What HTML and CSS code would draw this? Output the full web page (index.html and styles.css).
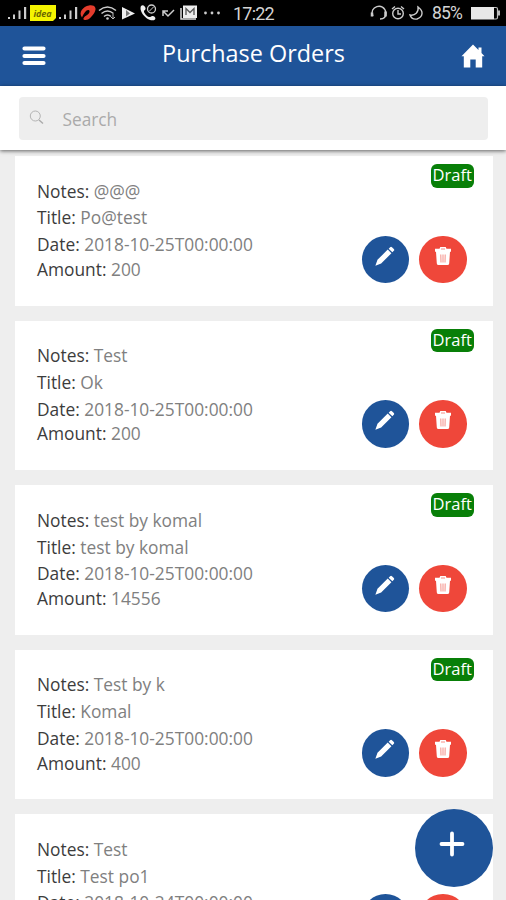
FILE: index.html
```html
<!DOCTYPE html>
<html lang="en">
<head>
<meta charset="utf-8">
<title>Purchase Orders</title>
<link rel="stylesheet" href="styles.css">
</head>
<body>
<svg class="defs" aria-hidden="true">
  <symbol id="pencil" viewBox="0 0 24 24"><path fill="#fff" d="M1.500 22.500l2.300-6.300L15 5l4 4L7.800 20.200zM16 4l1.600-1.600q1-1 2 0l2 2q1 1 0 2L20 8z"/></symbol>
  <symbol id="trash" viewBox="0 0 18 20"><path fill="#fff" d="M1 2.700h4.500L6.300 1h5.400l.8 1.700H17v3H1zM2 5.700h14l-.8 11.800q-.2 1.500-1.700 1.500h-9q-1.500 0-1.700-1.500z"/><path d="M7 3h4M6.800 8.500l.2 8M11.200 8.500l-.2 8M9 8.500v8" stroke="#ef473a" stroke-width="1" opacity=".6"/></symbol>
</svg>
<div class="status">
  <svg class="status-left" width="224" height="26" viewBox="0 0 224 26">
    <g fill="#ccc"><path d="M8 17h2v2H8zM13 14.500h2V19h-2zM18.500 10.500h2V19h-2zM24 7h2.200v12H24z"/><path d="M59 17h2v2h-2zM64 14.500h2V19h-2zM69.500 10.500h2V19h-2zM75 7h2.200v12H75z"/></g>
    <path d="M30 5h26v13l-3 3H30z" fill="#f5f400"/>
    <text class="idea" x="33.500" y="16.500" textLength="18">idea</text>
    <path d="M82 17.500c-4-5 1-11 7-12 6-1 8 3 5.500 7s-6 8-9.500 7.500-.5-3.500 2-5 3.500-4.500 1.500-5-4.500 3-6.500 7.500z" fill="#e43c2c"/>
    <g fill="none" stroke="#ccc" stroke-width="1.500"><path d="M99 10.500q8.500-7 17 0M101.500 13.500q6-5 12 0M104 16.500q3.500-3 7 0"/></g>
    <circle cx="107.500" cy="18.500" r="1.300" fill="#ccc"/><path d="M113 14v5M111 17l2 2 2-2" fill="none" stroke="#bbb"/>
    <path d="M122 7l13 6.500-13 6z" fill="#eee"/><path d="M126 10v6.500l4-3z" fill="#777"/>
    <path d="M141 6c2-2 4 0 4.500 2s-1.500 2-1.500 3.500 3 5 5 5.500 2-1.500 4-1 3 2 2 3.500c-5 4-17-7-14-13.500z" fill="#eee"/>
    <circle cx="151.500" cy="9" r="4" fill="none" stroke="#ccc" stroke-width="1.300"/><path d="M149 11.500l5-5" stroke="#ccc"/>
    <path d="M163 16v-5h5M163 11l5 5 6-6" fill="none" stroke="#ccc" stroke-width="1.500"/>
    <path d="M181 8v11h15" fill="none" stroke="#ddd" stroke-width="1.500"/><path d="M183 5.500h14V18h-14z" fill="#eee"/><path d="M186 15V8.500l4 4 4-4V15" fill="none" stroke="#555" stroke-width="1.300"/>
    <g fill="#ccc"><circle cx="205.500" cy="13" r="1.400"/><circle cx="212" cy="13" r="1.400"/><circle cx="218.500" cy="13" r="1.400"/></g>
  </svg>
  <span class="clock">17:22</span>
  <svg class="status-right" width="56" height="26" viewBox="0 0 56 26">
    <g fill="none" stroke="#ccc" stroke-width="1.400"><path d="M4 16c-5-9 11-15 13-3 0 4-2 6-6 6"/><path d="M3 12.500v4M16.500 11.500v5" stroke-width="2.500"/><circle cx="29" cy="13.500" r="5.300"/><path d="M29 10v4h3M23 9l3-2.500M35 9l-3-2.500"/><path d="M49 7c6 4 5 10-1 12-3 .5-6-1-7-4 5 1 9-3 8-8z"/></g>
  </svg>
  <span class="percent">85%</span>
  <svg width="31" height="26" viewBox="0 0 31 26"><path d="M1 7h23v12.500H1z" fill="#e8e8e8"/><path d="M24 7.500h2q1.500 0 1.500 1.500v8.500q0 1.500-1.500 1.500h-2" fill="none" stroke="#bbb" stroke-width="1.200"/><path d="M29 10.500v5" stroke="#bbb" stroke-width="2"/></svg>
</div>
<header class="bar">
  <svg class="menu" width="24" height="20" viewBox="0 0 24 20"><path d="M2.500 2.500h19M2.500 10h19M2.500 17h19" stroke="#fff" stroke-width="4.200" stroke-linecap="round"/></svg>
  <h1>Purchase Orders</h1>
  <svg class="home" width="24" height="24" viewBox="0 0 24 24"><path fill="#fff" d="M12 .5L17.500 6V3.500h3V9l3 3.200h-2.300V23.500h-6.500v-8H9.300v8H2.800V12.200H.5z"/></svg>
</header>
<div class="search-wrap">
  <div class="search">
    <svg width="15" height="15" viewBox="0 0 15 15"><circle cx="6.300" cy="6" r="5" fill="none" stroke="#b4b4b4"/><path d="M10 10l4 3.500" stroke="#aaa" stroke-width="1.400"/></svg>
    <span>Search</span>
  </div>
</div>
<main class="list">
  <article class="card">
    <div class="fields"><p><b>Notes:</b> @@@</p><p><b>Title:</b> Po@test</p><p><b>Date:</b> 2018-10-25T00:00:00</p><p class="amount"><b>Amount:</b> 200</p></div>
    <div class="side"><span class="badge">Draft</span><div class="actions"><span class="btn edit"><svg><use href="#pencil"/></svg></span><span class="btn del"><svg><use href="#trash"/></svg></span></div></div>
  </article>
  <article class="card">
    <div class="fields"><p><b>Notes:</b> Test</p><p><b>Title:</b> Ok</p><p><b>Date:</b> 2018-10-25T00:00:00</p><p class="amount"><b>Amount:</b> 200</p></div>
    <div class="side"><span class="badge">Draft</span><div class="actions"><span class="btn edit"><svg><use href="#pencil"/></svg></span><span class="btn del"><svg><use href="#trash"/></svg></span></div></div>
  </article>
  <article class="card">
    <div class="fields"><p><b>Notes:</b> test by komal</p><p><b>Title:</b> test by komal</p><p><b>Date:</b> 2018-10-25T00:00:00</p><p class="amount"><b>Amount:</b> 14556</p></div>
    <div class="side"><span class="badge">Draft</span><div class="actions"><span class="btn edit"><svg><use href="#pencil"/></svg></span><span class="btn del"><svg><use href="#trash"/></svg></span></div></div>
  </article>
  <article class="card">
    <div class="fields"><p><b>Notes:</b> Test by k</p><p><b>Title:</b> Komal</p><p><b>Date:</b> 2018-10-25T00:00:00</p><p class="amount"><b>Amount:</b> 400</p></div>
    <div class="side"><span class="badge">Draft</span><div class="actions"><span class="btn edit"><svg><use href="#pencil"/></svg></span><span class="btn del"><svg><use href="#trash"/></svg></span></div></div>
  </article>
  <article class="card">
    <div class="fields"><p><b>Notes:</b> Test</p><p><b>Title:</b> Test po1</p><p><b>Date:</b> 2018-10-24T00:00:00</p></div>
    <div class="side"><div class="actions"><span class="btn edit"></span><span class="btn del"></span></div></div>
  </article>
</main>
<div class="fab"><svg width="26" height="26" viewBox="0 0 26 26"><path d="M13 2.500v21M2.500 13h21" stroke="#fff" stroke-width="3.800" stroke-linecap="round"/></svg></div>
</body>
</html>
```
FILE: styles.css
```css
* { box-sizing: border-box; }
html { height: 900px; overflow: hidden; }
body {
  margin: 0;
  width: 506px;
  height: 900px;
  overflow: hidden;
  display: flex;
  flex-direction: column;
  position: relative;
  background: #eee;
  font-family: "Open Sans", "Noto Sans", sans-serif;
}
.defs { position: absolute; width: 0; height: 0; }
.status {
  flex: none;
  height: 26px;
  display: flex;
  align-items: center;
  background: #000;
  color: #d4d4d4;
  font: 18px/26px Roboto, sans-serif;
}
.status svg { flex: none; }
.idea { font: italic bold 9px "Open Sans", sans-serif; fill: #6b6700; }
.clock { width: 145px; padding: 1px 0 0 9px; letter-spacing: -0.8px; }
.percent { width: 38px; margin: 0 0 0 7px; font-size: 17.5px; letter-spacing: -0.8px; }
.bar {
  flex: none;
  height: 60px;
  padding: 0 21px 0 22px;
  display: flex;
  justify-content: space-between;
  align-items: center;
  background: #1f5499;
}
.bar h1 { margin: 0 0 7px; color: #fff; font-size: 23.4px; line-height: 32px; font-weight: 400; }
.search-wrap {
  flex: none;
  height: 64px;
  padding: 11px 18px 0 19px;
  background: #fff;
  box-shadow: 0 1px 4px rgba(0, 0, 0, .6);
  z-index: 1;
}
.search {
  height: 43px;
  padding-left: 10px;
  display: flex;
  align-items: center;
  gap: 18.5px;
  border-radius: 4px;
  background: #eee;
  color: #aaa;
  font-size: 17.3px;
}
.search svg { margin-top: -3px; }
.search span { padding-top: 1px; }
.list {
  flex: 1;
  min-height: 0;
  overflow: hidden;
  padding: 6px 13.5px 0 14.5px;
  display: flex;
  flex-direction: column;
  gap: 15px;
}
.card {
  flex: none;
  height: 149.6px;
  padding-left: 22.5px;
  display: flex;
  justify-content: space-between;
  background: #fff;
}
.fields { padding-top: 21.7px; }
.fields p { margin: 0; color: #808080; font-size: 17.35px; line-height: 26.7px; white-space: nowrap; }
.fields b { color: #3c3c3c; font-weight: 400; }
.fields .amount { line-height: 22px; }
.side {
  width: 131px;
  display: flex;
  flex-direction: column;
  justify-content: space-between;
  padding: 8px 0 22.4px;
}
.badge {
  align-self: flex-end;
  width: 43.5px;
  height: 23.5px;
  margin-right: 18.5px;
  border-radius: 6px;
  background: #087f08;
  color: #fff;
  font-size: 16.5px;
  line-height: 21px;
  text-align: center;
}
.actions { display: flex; gap: 10.2px; margin-top: auto; }
.btn { width: 47.6px; height: 47.6px; border-radius: 50%; }
.edit { background: #1f5499; }
.del { background: #ef473a; }
.btn svg { display: block; }
.edit svg { width: 22px; height: 22px; margin: 9px 0 0 12px; }
.del svg { width: 18px; height: 20px; margin: 10px 0 0 14.6px; }
.fab {
  position: absolute;
  left: 415px;
  top: 809px;
  width: 78px;
  height: 78px;
  padding: 22px 0 0 24px;
  border-radius: 50%;
  background: #1f5499;
  z-index: 2;
}
```
